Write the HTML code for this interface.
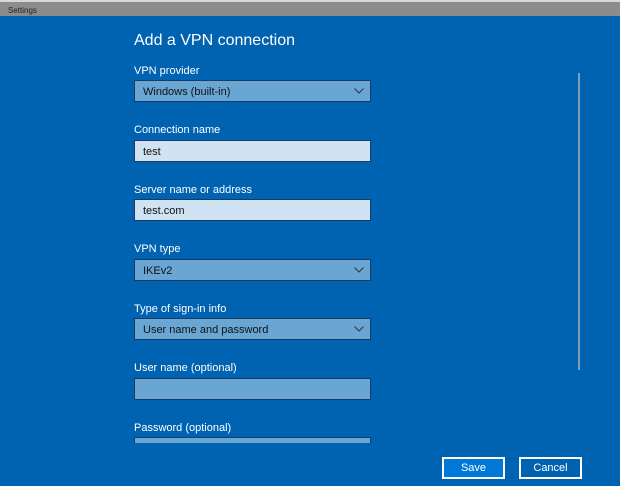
<!DOCTYPE html>
<html><head><style>
*{margin:0;padding:0;box-sizing:border-box}
body{width:620px;height:486px;overflow:hidden;background:#0063b1;font-family:"Liberation Sans",sans-serif;color:#fff;position:relative}
.tb{position:absolute;left:0;top:0;width:620px;height:16px;background:#8c8c8c;border-top:2px solid #d8d8d8}
.tb span{position:absolute;left:8px;top:4px;font-size:8px;color:#222}
.h{position:absolute;left:134px;top:32px;font-size:16px;font-weight:normal}
.l{position:absolute;left:134px;font-size:11px}
.b{position:absolute;left:134px;width:237px;height:22px;border:1px solid #1b3c62;font-size:11px;padding:5px 0 0 8px;color:#111}
.d{background:#6aa6d3}
.t{background:#cfe3f2}
.d svg{position:absolute;right:6px;top:7px}
.sb{position:absolute;left:578px;top:73px;width:2px;height:297px;background:#7f9cba}
.btn{position:absolute;top:457px;width:63px;height:22px;border:2px solid #fff;font-size:11px;text-align:center;line-height:19px}
</style></head><body>
<div class="tb"><span>Settings</span></div>
<div class="h">Add a VPN connection</div>
<div class="l" style="top:65px">VPN provider</div>
<div class="b d" style="top:80px">Windows (built-in)<svg width="10" height="6"><path d="M0.5 0.5 L5 5 L9.5 0.5" stroke="#333" fill="none"/></svg></div>
<div class="l" style="top:124px">Connection name</div>
<div class="b t" style="top:140px">test</div>
<div class="l" style="top:184px">Server name or address</div>
<div class="b t" style="top:199px">test.com</div>
<div class="l" style="top:243px">VPN type</div>
<div class="b d" style="top:259px">IKEv2<svg width="10" height="6"><path d="M0.5 0.5 L5 5 L9.5 0.5" stroke="#333" fill="none"/></svg></div>
<div class="l" style="top:303px">Type of sign-in info</div>
<div class="b d" style="top:318px">User name and password<svg width="10" height="6"><path d="M0.5 0.5 L5 5 L9.5 0.5" stroke="#333" fill="none"/></svg></div>
<div class="l" style="top:362px">User name (optional)</div>
<div class="b d" style="top:378px"></div>
<div class="l" style="top:422px">Password (optional)</div>
<div class="b d" style="top:437px;height:6px;border-bottom:none"></div>
<div class="sb"></div>
<div class="btn" style="left:442px;background:#0078d7">Save</div>
<div class="btn" style="left:519px">Cancel</div>
</body></html>
